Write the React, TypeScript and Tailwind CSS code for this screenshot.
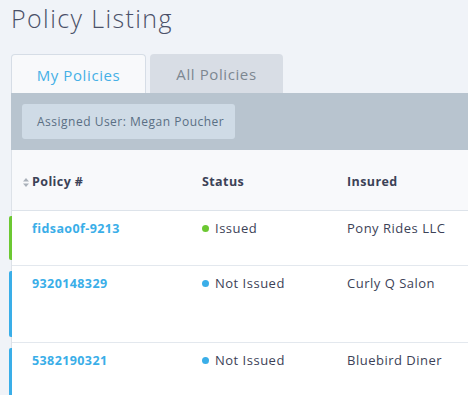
import React from "react";

type Row = {
  id: string;
  status: "Issued" | "Not Issued";
  insured: string;
  height: string;
};

const rows: Row[] = [
  { id: "fidsao0f-9213", status: "Issued", insured: "Pony Rides LLC", height: "h-[55px]" },
  { id: "9320148329", status: "Not Issued", insured: "Curly Q Salon", height: "h-[77px]" },
  { id: "5382190321", status: "Not Issued", insured: "Bluebird Diner", height: "h-[77px]" },
];

function SortIcon() {
  return (
    <svg width="6" height="9" viewBox="0 0 6 9" className="mr-[3px]">
      <path d="M3 0 L6 3.5 H0 Z" fill="#aab1ba" />
      <path d="M3 9 L6 5.5 H0 Z" fill="#aab1ba" />
    </svg>
  );
}

export default function App() {
  return (
    <div
      className="w-[468px] h-[395px] overflow-hidden bg-[#f0f3f8] text-[#3c4257]"
      style={{ fontFamily: "'Open Sans', 'Liberation Sans', sans-serif" }}
    >
      {/* Title */}
      <h1 className="pl-[11px] pt-[2px] h-[54px] text-[25px] font-light text-[#4a5068] leading-[32px] tracking-[1.4px]">
        Policy Listing
      </h1>

      {/* Tabs */}
      <div className="flex pl-[11px] gap-[4px] h-[39px]">
        <div className="w-[135px] flex items-center justify-center rounded-t-[4px] border border-b-0 border-[#d6dde6] bg-[#f8f9fb] text-[15px] text-[#45b0e6] tracking-[0.6px] pt-[2px]">
          My Policies
        </div>
        <div className="w-[133px] flex items-center justify-center rounded-t-[4px] bg-[#d8dde5] text-[15px] text-[#7d8791] tracking-[0.6px] pt-[2px]">
          All Policies
        </div>
      </div>

      {/* Filter bar */}
      <div className="ml-[11px] h-[57px] bg-[#b8c4cf] flex items-center pl-[11px]">
        <div className="h-[35px] w-[213px] rounded-[3px] bg-[#cfdbe6] flex items-center pl-[15px] text-[12px] text-[#5a6f84] tracking-[0.5px]">
          Assigned User: Megan Poucher
        </div>
      </div>

      {/* Table */}
      <div className="ml-[11px] border-l border-[#dde2e8] bg-[#f8f9fb]">
        <div className="h-[61px] grid grid-cols-[179px_145px_1fr] items-center border-b border-[#dde3ea] pl-[11px] text-[12.5px] font-bold text-[#3c4257] tracking-[0.4px] pt-[4px]">
          <div className="flex items-center">
            <SortIcon />
            Policy #
          </div>
          <div>Status</div>
          <div>Insured</div>
        </div>
        {rows.map((r) => (
          <div
            key={r.id}
            className={`relative ${r.height} grid grid-cols-[170px_145px_1fr] items-start border-b border-[#e3e8ee] bg-white pl-[20px] pt-[9px] text-[13px] leading-[18px] tracking-[0.5px]`}
          >
            <div
              className={`absolute left-[-3px] top-[5px] bottom-[5px] w-[3px] rounded-l-[2px] ${
                r.status === "Issued" ? "bg-[#6cc832]" : "bg-[#3aaee8]"
              }`}
            />
            <div className="font-bold text-[12.5px] tracking-[0.4px] text-[#3aaee8]">{r.id}</div>
            <div className="flex items-center -mt-[1px]">
              <span
                className={`mr-[6px] w-[7px] h-[7px] rounded-full ${
                  r.status === "Issued" ? "bg-[#6cc832]" : "bg-[#3aaee8]"
                }`}
              />
              <span className="text-[#3c4257]">{r.status}</span>
            </div>
            <div className="text-[#3c4257] -mt-[1px]">{r.insured}</div>
          </div>
        ))}
      </div>
    </div>
  );
}
